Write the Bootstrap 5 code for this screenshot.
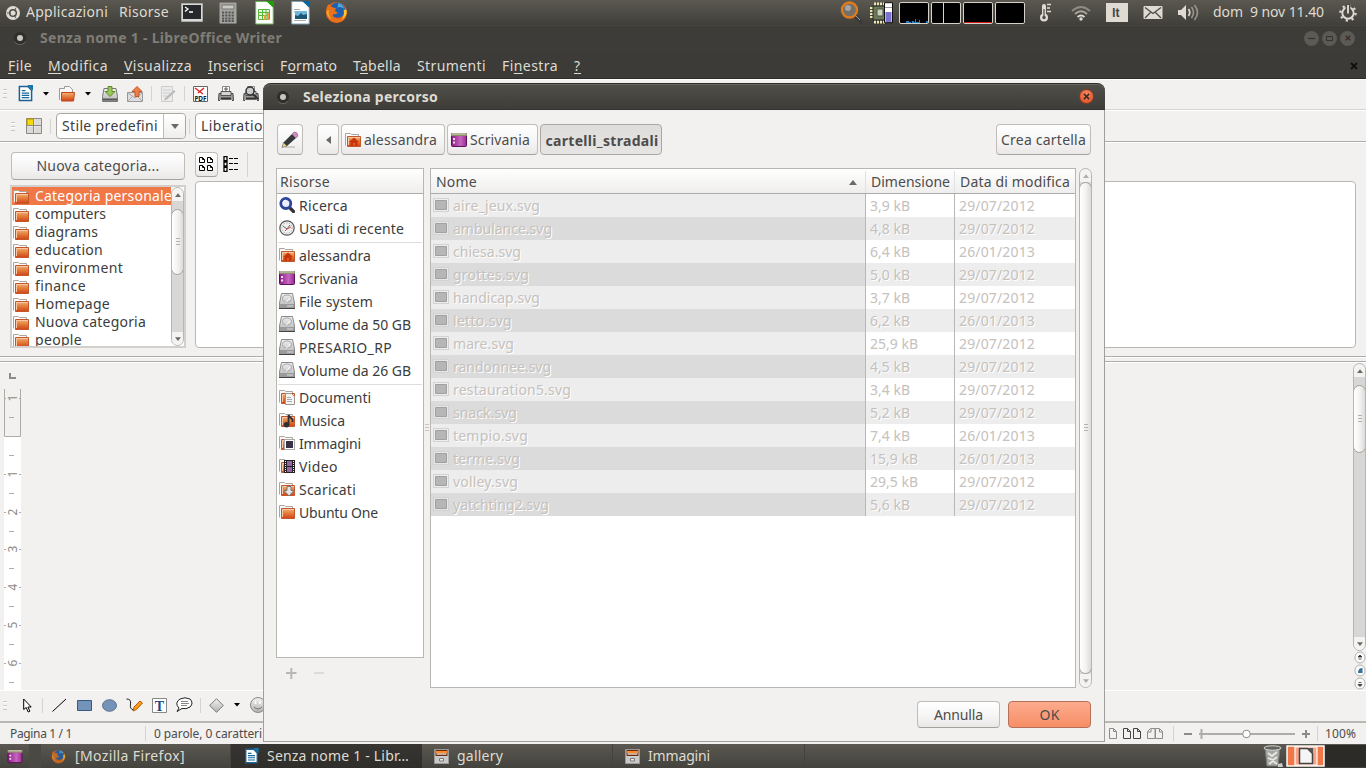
<!DOCTYPE html>
<html lang="it">
<head>
<meta charset="utf-8">
<title>Seleziona percorso</title>
<link rel="stylesheet" href="https://cdn.jsdelivr.net/npm/bootstrap@5.3.0/dist/css/bootstrap.min.css">
<style>
body{width:1366px;height:768px;overflow:hidden;background:#f2f1f0;font:14px/20px "Noto Sans","Open Sans",sans-serif;color:#3c3c3c}
svg{display:block;flex:none}
[data-w]{display:inline-block;white-space:nowrap;flex:none}
.bar{display:flex;align-items:center;flex:none}
.panel{height:25px;background:linear-gradient(#5a5850,#403f3a);color:#dfdbd2}
.panel [data-w]{padding-bottom:2px}
.wtitle{height:27px;background:#3d3c38;color:#7f7d76;font-weight:700;border-top:1px solid #45443f;padding-bottom:2px}
.menus{height:27px;background:#3c3b37;color:#dfdbd2;gap:16px;padding:2px 0 0 8px;border-bottom:1px solid #2e2d2a}
.menus u{text-underline-offset:2px}
.tool1{height:31px;border-top:1px solid #fff;border-bottom:1px solid #d6d4d1;padding-bottom:2px}
.tool2{height:32px;border-top:1px solid #fff;border-bottom:1px solid #aeaca8}
.vsep{width:1px;height:15px;background:#d5d3d0;flex:none}
.grip{width:4px;height:9px;flex:none;background:repeating-linear-gradient(#cbc9c6 0 1px,#fff 1px 2px,transparent 2px 4px)}
.gbtn{display:flex;align-items:center;justify-content:center;border:1px solid #c0bdb8;border-bottom-color:#a5a29d;border-radius:4px;background:linear-gradient(#fff,#f7f6f6 50%,#eae8e7);flex:none;color:#4c4c4c}
.gbtn.pressed{background:linear-gradient(#dfdddb,#e7e5e3);border-color:#aaa7a2;font-weight:700}
.combo{height:26px;border:1px solid #aaa7a2;border-radius:4px;background:#fff;display:flex;align-items:center;flex:none}
.combo .drop{width:22px;height:24px;border-left:1px solid #c0bdb8;background:linear-gradient(#fff,#efeeed);border-radius:0 4px 4px 0}
.gallery{height:215px;border-top:1px solid #fff}
.newcat{width:174px;height:28px;margin-top:9px}
.glist{width:176px;height:163px;border:2px solid #d2d0cc;background:#fff;margin:5px 0 0 10px;display:flex}
.gitems{width:159px;overflow:hidden}
.gitem{height:18px;display:flex;align-items:center;line-height:18px}
.gitem svg{margin:1px 6px 0 1px}
.gitem.sel{background:#f07746;color:#fff}
.split{height:6px;border-top:1px solid #aeaca8;border-bottom:1px solid #aeaca8;background:#f2f1f0;box-shadow:inset 0 1px #fff}
.page-area{height:328px;border-top:1px solid #fff}
.gscroll{width:13px;border:1px solid #b8b5b1;border-radius:7px;background:#d9d7d5;display:flex;flex-direction:column;overflow:hidden;flex:none}
.gscroll .cap{height:13px;background:#f4f3f2;display:flex;align-items:center;justify-content:center;flex:none}
.thumb{border:1px solid #a5a29d;border-radius:7px;background:linear-gradient(90deg,#fff,#f4f3f2 50%,#dddbd9);margin:0 -1px;display:flex;align-items:center;justify-content:center;flex:none}
.draw{height:31px;border-top:1px solid #fff;padding-bottom:2px}
.status{height:23px;border-top:2px solid #b9b7b3;font-size:12px;color:#4c4c4c;background:#f2f1f0}
.tasks{height:24px;background:linear-gradient(#5a5850,#43423d);color:#dfdbd2}
.task{height:24px;display:flex;align-items:center;flex:none;border-right:1px solid #44433e}
.task.active{background:linear-gradient(#363531,#2f2e2b);border:0}
.dialog{position:absolute;left:263px;top:83px;width:842px;height:659px;background:#f2f1f0;border:1px solid #a19f9b;border-top:0;border-radius:8px 8px 0 0}
.dtitle{height:27px;margin:0 -1px;background:linear-gradient(#4f4e48,#3e3d39);border-top:1px solid #2c2b28;border-bottom:1px solid #33322e;border-radius:8px 8px 0 0;box-shadow:inset 0 1px #6a6961;color:#dfdbd2;font-weight:700}
.close-dot{width:15px;height:15px;border-radius:50%;background:radial-gradient(circle at 50% 30%,#f58763,#df4c1d);border:1px solid #8e3a1f;display:flex;align-items:center;justify-content:center;flex:none;margin-right:11px}
.path{margin-top:14px;height:31px;gap:2px}
.box{border:1px solid #b9b7b3;background:#fff;flex:none}
.head{height:25px;background:linear-gradient(#fff,#efeeed);border-bottom:1px solid #aeaca8;display:flex;align-items:center;color:#4c4c4c;padding-top:2px}
.place{height:23px;display:flex;align-items:center}
.place svg{margin:0 4px 1px 2px}
.rule{height:1px;background:#dedddb;margin:2px 1px 1px}
.frow{height:23px;display:flex;background:#fff;color:#c5c1bd;text-shadow:1px 1px #fff}
.frow div{height:23px;display:flex;align-items:center;flex:none}
.frow svg{margin:0 0 1px}
.frow .nm{width:435px;background:#ededed;border-right:1px solid #b9b7b3;padding-left:2px}
.frow .sz{width:89px;border-right:1px solid #b9b7b3;padding-left:4px}
.frow .dt{padding-left:4px}
.frow:nth-child(even){background:#ededed}
.frow:nth-child(even) .nm{background:#dbdbdb}
.graph{width:30px;height:22px;border:1px solid #d6d2ca;border-radius:2px;background:#000;margin-right:2px;flex:none}
.wbtn{width:15px;height:15px;border-radius:50%;background:#5b5a54;flex:none;margin-left:3px;display:flex;align-items:center;justify-content:center}
.ok{background:linear-gradient(#fcab8d,#f78e66);border-color:#b5705a}
.actions .gbtn{width:83px;height:27px}
.s1{margin-left:1px}.s2{margin-left:2px}.s3{margin-left:3px}.s4{margin-left:4px}.s5{margin-left:5px}.s6{margin-left:6px}.s7{margin-left:7px}.s9{margin-left:9px}.s10{margin-left:10px}.s11{margin-left:11px}.s12{margin-left:12px}.s13{margin-left:13px}.s14{margin-left:14px}.s15{margin-left:15px}.s16{margin-left:16px}.s17{margin-left:17px}.s18{margin-left:18px}.s20{margin-left:20px}.s73{margin-left:73px}
</style>
<script src="https://cdn.jsdelivr.net/npm/bootstrap@5.3.0/dist/js/bootstrap.bundle.min.js"></script>
</head>
<body class="d-flex flex-column">
<svg width="0" height="0" class="position-absolute">
<defs>
<linearGradient id="or" x2="0" y2="1"><stop stop-color="#f0b277"/><stop offset=".5" stop-color="#e47a3a"/><stop offset="1" stop-color="#cf4317"/></linearGradient>
<linearGradient id="gr" x2="0" y2="1"><stop stop-color="#f2f2f2"/><stop offset="1" stop-color="#b2b2b2"/></linearGradient>
<linearGradient id="pu" x2="1"><stop stop-color="#8b1d84"/><stop offset=".6" stop-color="#c765c0"/><stop offset="1" stop-color="#9a2c93"/></linearGradient>
<symbol id="folder" viewBox="0 0 16 16"><path d="M.5 13.500v-12h5l1 1h7v3" fill="#fafafa" stroke="#aaa59d"/><path d="M2.500 4.500h13v10h-13z" fill="url(#or)" stroke="#c5562a"/><path d="M3.500 13V5.500H15" fill="none" stroke="#f5caa4"/></symbol>
<symbol id="home" viewBox="0 0 16 16"><use href="#folder"/><path d="M9 5.500L4 10h1.500v4h2.500v-3h2v3h2.500v-4H14z" fill="#c8350c"/></symbol>
<symbol id="desk" viewBox="0 0 16 16"><rect x=".5" y="1.500" width="15" height="13" rx="1" fill="url(#pu)" stroke="#5c1258"/><path d="M0 1h16v3H0z" fill="#8f8c6c"/><path d="M1 1.500h14v1H1z" fill="#d9d8c4"/><path d="M2 6h2v2H2zM2 9.500h2v2H2z" fill="#f3def2"/></symbol>
<symbol id="disk" viewBox="0 0 16 16"><path d="M2.500 .500h11l2 9.500v5H.5v-5z" fill="url(#gr)" stroke="#8a8a8a"/><ellipse cx="8" cy="5.500" rx="4.500" ry="3.500" fill="none" stroke="#a9a9a9"/><path d="M7 9.500L11 5" stroke="#fff"/><path d="M1 11h14v4H1z" fill="#9b9b9b"/><path d="M0 15.500h16" stroke="#444"/><path d="M8 13h6" stroke="#ddd"/></symbol>
<symbol id="file" viewBox="0 0 16 16"><rect x=".5" y="1.500" width="15" height="13" fill="#eee" fill-opacity=".6" stroke="#d2d2d2"/><path d="M2.500 3.500h11v9h-11z" fill="#b6b6b6" stroke="#a0a0a0"/></symbol>
<symbol id="mag" viewBox="0 0 16 16"><path d="M10.500 10.500l4 4" stroke="#333" stroke-width="3.200" stroke-linecap="round"/><circle cx="6.800" cy="6.500" r="5" fill="#e9eefa" stroke="#2d4697" stroke-width="2.800"/><path d="M4 6a3 3 0 0 1 3-3" stroke="#fff" fill="none"/></symbol>
<symbol id="clock" viewBox="0 0 16 16"><circle cx="8" cy="8" r="7.200" fill="#f0f0f0" stroke="#555" stroke-width="1.200"/><circle cx="8" cy="8" r="5.200" fill="none" stroke="#999" stroke-dasharray="1 1.600"/><path d="M4 6l4 3 3-4" stroke="#666" fill="none"/><path d="M8 9l4-2M6 11l2-2" stroke="#d44"/></symbol>
<symbol id="docs" viewBox="0 0 16 16"><use href="#folder"/><path d="M6.500 4.500h6l3 3v8h-9z" fill="#f4f4f2" stroke="#99958f"/><path d="M8 8.500h4M8 10.500h5M8 12.500h5" stroke="#aaa"/></symbol>
<symbol id="music" viewBox="0 0 16 16"><use href="#folder"/><path d="M9.500 13V3q1 2 4 4.500V10" fill="none" stroke="#2e3033" stroke-width="1.800"/><circle cx="7.500" cy="12.800" r="2.700" fill="#2e3033"/></symbol>
<symbol id="pics" viewBox="0 0 16 16"><use href="#folder"/><path d="M5.500 4.500h10v10h-10z" fill="#fff" stroke="#aaa"/><path d="M7 6h7v7H7z" fill="#3a3147"/></symbol>
<symbol id="video" viewBox="0 0 16 16"><use href="#folder"/><path d="M5 2h11v13H5z" fill="#262026"/><path d="M8 3h5v5H8zM8 9h5v5H8z" fill="#906a9d"/><path d="M6.500 3v12M14.500 3v12" stroke="#eee" stroke-dasharray="1 1"/></symbol>
<symbol id="down" viewBox="0 0 16 16"><use href="#folder"/><path d="M8 5.500h4v4h3l-5 5.500-5-5.500h3z" fill="#e5e5e5" stroke="#777"/></symbol>
<symbol id="up" viewBox="0 0 8 5"><path d="M0 5L4 0l4 5z" fill="#6c6a66"/></symbol>
<symbol id="dn" viewBox="0 0 8 5"><path d="M0 0h8L4 5z" fill="#6c6a66"/></symbol>
<symbol id="bars" viewBox="0 0 4 8"><path d="M0 .5h4M0 3.500h4M0 6.500h4" stroke="#b5b2ae"/></symbol>
<symbol id="arr" viewBox="0 0 6 4"><path d="M0 0h6L3 3.500z" fill="#000"/></symbol>
<symbol id="x" viewBox="0 0 8 8"><path d="M1 1l6 6M7 1L1 7" stroke="#3a2b24" stroke-width="1.700"/></symbol>
<symbol id="dot" viewBox="0 0 14 14"><circle cx="7" cy="7" r="6" fill="#2f2e2b"/><path d="M2 11a6 6 0 0 0 10 0" fill="none" stroke="#6a6963"/><circle cx="7" cy="7" r="3" fill="#c9c6bf"/></symbol>
<symbol id="ff" viewBox="0 0 24 24"><circle cx="12" cy="12" r="11" fill="#e2631c"/><circle cx="13" cy="9.500" r="8" fill="#1f5fae"/><path d="M14 2q5 1 6 6-4-3-7-1z" fill="#4fa7de"/><path d="M2 6q-2 6 1 11 4 6 10 5.500 8-1 9.500-10-1 3-4 5-5 3-9 0-2-2-1-4 2 1 5-1l-3-2q0-2 1-3Q5 6 4 3z" fill="#e8721c"/><path d="M22.500 9q1 7-5 10 3-4 2-10z" fill="#ffc72c"/><path d="M4 9q-1 6 3 10-5-2-5.500-8z" fill="#f9a72b"/></symbol>
<symbol id="writer" viewBox="0 0 16 18"><path d="M1.500 1.500h9l4 4v11h-13z" fill="#fff" stroke="#1e6091" stroke-width="1.600"/><path d="M10 0h6v6z" fill="#1675a9"/><path d="M4 6h4M4 8.500h8M4 11h8M4 13.500h8" stroke="#126a9d" stroke-width="1.300"/></symbol>
<symbol id="cab" viewBox="0 0 15 15"><path d="M.5.500h14v14H.5z" fill="#d4d4d4" stroke="#999"/><path d="M1.500 1h12v6h-12z" fill="#6a2c12"/><path d="M2 3h11" stroke="#ff8a2e" stroke-width="2"/><path d="M2.500 5h10" stroke="#fff4e0" stroke-width="1.300"/><path d="M1 7.500h13V14H1z" fill="#c9c9c9"/><path d="M5.500 9.500h4v2.500h-4z" fill="#eee" stroke="#777"/></symbol>
<symbol id="printer" viewBox="0 0 16 16"><path d="M4.500.500h7v7h-7z" fill="#fff" stroke="#888"/><path d="M1 7.500h14l.5 7H.5z" fill="#9b9b9b" stroke="#4b4b4b"/><path d="M3 5.500h10v4H3z" fill="#d5d5d5" stroke="#555"/><path d="M3 12.500h10" stroke="#333" stroke-width="2"/><path d="M2 14.500h12" stroke="#eee"/></symbol>
<symbol id="pg" viewBox="0 0 8 11"><path d="M.5.500h4l3 3v7h-7zM4.500.500v3h3" fill="none" stroke="currentColor"/></symbol>
<symbol id="mini" viewBox="0 0 8 8"><path d="M1.500 1.500h3l2 2v3h-5zM4.500 1.500v2h2" fill="#fff" stroke="#000"/></symbol>
</defs></svg>

<header class="bar panel">
<svg class="s6" width="14" height="14" viewBox="0 0 14 14"><circle cx="7" cy="7" r="7" fill="#dfdbd2"/><circle cx="7" cy="7" r="3.300" fill="none" stroke="#4b4a44" stroke-width="1.500"/><path d="M7 7h-6M7 7l3-5.200M7 7l3 5.200" stroke="#4b4a44" stroke-width=".9"/><circle cx="7" cy="7" r="2.300" fill="#dfdbd2"/></svg>
<span class="s6" data-w="82">Applicazioni</span><span class="s11" data-w="50">Risorse</span>
<svg class="s12" width="22" height="19" viewBox="0 0 22 19"><path d="M.5.500h21v18H.5z" fill="#d9d9d9" stroke="#aaa"/><path d="M2 2h18v14H2z" fill="#26282a"/><path d="M4 4l3 2-3 2.500M8 9h4" fill="none" stroke="#fff" stroke-width="1.300"/></svg>
<svg class="ms-3" width="18" height="22" viewBox="0 0 18 22"><rect x=".5" y=".5" width="17" height="21" rx="1" fill="#a5a5a0" stroke="#7a7a75"/><path d="M3 3h12v4H3z" fill="#c8cbc0" stroke="#777"/><path d="M3 10.500h12M3 13.500h12M3 16.500h12M3 19h12" stroke="#555" stroke-width="1.800" stroke-dasharray="2.200 1"/></svg>
<svg class="s18" width="19" height="24" viewBox="0 0 19 24"><path d="M.7.500h12l5.500 6v16.500H.7z" fill="#fff" stroke="#6db355"/><path d="M11 0h8v7z" fill="#18a303"/><path d="M3.500 8.500h11v10h-11zM3.500 11.500h11M3.500 14.500h11M7.500 8v10M11 8v10" fill="#e9f7dc" stroke="#58b63c"/><path d="M9 19v-5h2v5m1 0v-7h2v7" fill="#e9a13b"/></svg>
<svg class="s17" width="19" height="24" viewBox="0 0 19 24"><path d="M.7.500h12l5.500 6v16.500H.7z" fill="#fff" stroke="#7d9fb6"/><path d="M11 0h8v7z" fill="#0369a3"/><path d="M3 8.500h6M3 11h3M3 19.500h12" stroke="#aaa"/><path d="M4 10h12v8H4z" fill="#70b6db"/><path d="M4 18v-4l3 1 3-3 2 2 4-1v5z" fill="#1d5574"/></svg>
<svg class="s15" width="23" height="23"><use href="#ff"/></svg>
<div class="ms-auto bar">
<svg width="23" height="23" viewBox="0 0 23 23"><path d="M14 14l7 7" stroke="#3b3a38" stroke-width="4" stroke-linecap="round"/><path d="M15 14l5 5" stroke="#999" stroke-width="1"/><circle cx="9.500" cy="9" r="7.500" fill="#746f67" stroke="#e07b1d" stroke-width="2.400"/><circle cx="8" cy="7" r="3" fill="#cbc8c3" opacity=".6"/></svg>
<svg class="s7" width="24" height="22" viewBox="0 0 24 22"><path d="M4 2h11M4 20h11" stroke="#ece7ad" stroke-width="3" stroke-dasharray="2 1"/><path d="M1.500 5v12" stroke="#ece7ad" stroke-width="3" stroke-dasharray="2 1"/><path d="M3 4h12v14H3z" fill="#6b7a58" stroke="#222"/><path d="M7 7h6v7H7z" fill="#c9d0bf" stroke="#4a5540"/><path d="M14.500.700h8v20h-8z" fill="#fff" stroke="#111"/><path d="M15.500 10h6v10h-6z" fill="#7a73cf"/><path d="M15 5.500h7" stroke="#999"/></svg>
<svg class="graph s5" viewBox="0 0 28 20"><path d="M6 20v-2h3v1h2v1zM12 20v-2h2v1h1v-3h1v3h3v-2h1v3zM26 20v-2h2v2z" fill="#1b7fc4"/></svg><svg class="graph" viewBox="0 0 28 20"><path d="M11.500 0v20" stroke="#fce03a"/></svg><svg class="graph" viewBox="0 0 28 20"><path d="M0 19.500h28" stroke="#d01818"/></svg><svg class="graph" viewBox="0 0 28 20"></svg>
<svg class="s12" width="12" height="19" viewBox="0 0 12 19"><path d="M5 3v11" stroke="#dfdbd2" stroke-width="4" stroke-linecap="round"/><circle cx="5" cy="14.500" r="4" fill="#dfdbd2"/><path d="M5 6v8" stroke="#4b4a44" stroke-width="1.200"/><circle cx="5" cy="14.500" r="1.700" fill="#4b4a44"/><path d="M8 1.500h4M8 5h3M8 8.500h4" stroke="#dfdbd2" stroke-width="1.500"/></svg>
<svg class="s20" width="20" height="16" viewBox="0 0 20 16"><g fill="none" stroke-width="1.900"><path d="M1 6q9-8 18 0" stroke="#8f8c84"/><path d="M4 9q6-5.500 12 0" stroke="#aaa79f"/><path d="M6.500 12q3.500-3 7 0" stroke="#dfdbd2"/></g><circle cx="10" cy="14" r="1.700" fill="#dfdbd2"/></svg>
<svg class="s15" width="22" height="19" viewBox="0 0 22 19"><path d="M0 0h22v19H0z" fill="#dfdbd2"/><text x="6" y="14" font-size="12" font-weight="700" fill="#4a4943" font-family="Roboto,sans-serif">It</text></svg>
<svg class="s15" width="20" height="14" viewBox="0 0 20 14"><rect width="19" height="13" x=".5" rx="1" fill="#dfdbd2"/><path d="M2 1.500l8 6 8-6M2 12l5.500-5.500M18 12l-5.500-5.500" stroke="#4b4a44" fill="none" stroke-width="1.300"/></svg>
<svg class="s15" width="21" height="17" viewBox="0 0 21 17"><path d="M0 6h3l5-5v15l-5-5H0z" fill="#dfdbd2"/><path d="M10.500 5q2.500 3.500 0 7" fill="none" stroke="#dfdbd2" stroke-width="1.700"/><path d="M13.500 3q4 5.500 0 11M16.500 1q6 7.500 0 15" fill="none" stroke="#98958d" stroke-width="1.600"/></svg>
<span class="s14" data-w="111">dom&nbsp; 9 nov 11.40</span>
<svg class="s15" width="18" height="18" viewBox="0 0 19 19"><circle cx="9.500" cy="9.500" r="6" fill="none" stroke="#dfdbd2" stroke-width="2"/><circle cx="9.500" cy="9.500" r="8" fill="none" stroke="#dfdbd2" stroke-width="2.500" stroke-dasharray="2.300 4"/><path d="M9.500 0v10" stroke="#4b4a44" stroke-width="5"/><path d="M9.500 1v9" stroke="#dfdbd2" stroke-width="2"/></svg><span class="s9"></span>
</div></header>

<div class="bar wtitle"><svg class="s13" width="14" height="14"><use href="#dot"/></svg><span class="s13" data-w="242">Senza nome 1 - LibreOffice Writer</span>
<span class="ms-auto wbtn"><svg width="7" height="7"><path d="M0 3.500h7" stroke="#33322e" stroke-width="1.200"/></svg></span><span class="wbtn"><svg width="7" height="5"><path d="M.5.500h6v4h-6z" fill="none" stroke="#33322e"/></svg></span><span class="wbtn"><svg width="6" height="6"><use href="#x"/></svg></span><span class="s11"></span></div>
<nav class="bar menus"><span data-w="24"><u>F</u>ile</span><span data-w="60"><u>M</u>odifica</span><span data-w="68"><u>V</u>isualizza</span><span data-w="56"><u>I</u>nserisci</span><span data-w="57">F<u>o</u>rmato</span><span data-w="48">T<u>a</u>bella</span><span data-w="69">Strumenti</span><span data-w="56">Fi<u>n</u>estra</span><span data-w="7"><u>?</u></span><svg class="ms-auto me-2" width="8" height="8" viewBox="0 0 8 8"><path d="M1 1l6 6M7 1L1 7" stroke="#111" stroke-width="2"/></svg></nav>

<div class="bar tool1"><span class="grip s3"></span>
<svg class="s11" width="15" height="17"><use href="#writer"/></svg><svg class="s10" width="6" height="4"><use href="#arr"/></svg>
<svg class="s10" width="16" height="16" viewBox="0 0 16 16"><path d="M.5 14V2.500h5V.500h5l3 3V7" fill="#f8f8f8" stroke="#999"/><path d="M2.500 6.500h13l-1 8.500h-12z" fill="url(#or)" stroke="#c5431a"/></svg><svg class="s10" width="6" height="4"><use href="#arr"/></svg>
<svg class="s11" width="16" height="16" viewBox="0 0 16 16"><path d="M2 2.500h12l1.500 8v5H.5v-5z" fill="url(#gr)" stroke="#777"/><path d="M6 .500h4v5h3L8 10.500 3 5.500h3z" fill="#9bc75f" stroke="#5c8a25"/><path d="M1 13.500h14" stroke="#555" stroke-width="2"/></svg>
<svg class="s9" width="16" height="16" viewBox="0 0 16 16"><path d="M.5 6.500h15v9H.5z" fill="#ddd" stroke="#999"/><path d="M1 7l7 5 7-5M1 15l5-5M15 15l-5-5" fill="none" stroke="#aaa"/><path d="M10 .500l5 5h-3v5H8v-5H5z" fill="#e9804a" stroke="#c9541f"/></svg>
<span class="vsep ms-2"></span>
<svg class="ms-2" width="16" height="16" viewBox="0 0 16 16"><path d="M1.500.500h11v15h-11z" fill="#ececec" stroke="#ccc"/><path d="M3 4h8M3 7h7M3 10h4" stroke="#ccc"/><path d="M5 12l9-8 1.500 1.500-8.500 8-3 1z" fill="#bbb"/></svg>
<span class="vsep ms-2"></span>
<svg class="ms-2" width="15" height="16" viewBox="0 0 15 16"><path d="M.5.500h14v15H.5z" fill="#fff" stroke="#666"/><path d="M2 2l8 6M11 2L5 7" stroke="#d22" stroke-width="1.500"/><text x="1.500" y="14.500" font-size="6.500" font-weight="700" textLength="12" fill="#222">PDF</text></svg>
<svg class="s10" width="16" height="16"><use href="#printer"/><path d="M8 1v4M6 3h4" stroke="#555"/></svg>
<svg class="s9" width="16" height="16"><use href="#printer"/><circle cx="7" cy="5" r="4" fill="#ccc" stroke="#333" stroke-width="1.500"/><path d="M10 8l5 5" stroke="#333" stroke-width="2"/></svg></div>

<div class="bar tool2"><span class="grip s11"></span>
<svg class="s11" width="16" height="16" viewBox="0 0 16 16"><path d="M.5.500h15v15H.5z" fill="#dcdad7" stroke="#8d8b88"/><path d="M1 1h6.500v6.500H1z" fill="#f5d90a" stroke="#a89500"/><path d="M8 1v14M1 8h14" stroke="#f2f1f0"/><path d="M7.500 0v16M0 7.500h16" stroke="#8d8b88"/></svg>
<span class="vsep ms-2"></span>
<div class="combo s5"><span class="s5" data-w="96">Stile predefini</span><span class="drop s5 bar justify-content-center"><svg width="8" height="5"><use href="#dn"/></svg></span></div>
<span class="vsep s3"></span><div class="combo s5 pe-5"><span class="s5" data-w="71">Liberation</span></div></div>

<section class="d-flex gallery">
<div><div class="gbtn s11 newcat"><span data-w="123">Nuova categoria...</span></div>
<div class="glist"><div class="gitems" id="cats"></div>
<div class="gscroll h-100"><span class="cap"><svg width="6" height="4"><use href="#up"/></svg></span><div class="pt-1 pb-1"></div><span class="thumb" style="height:66px"><svg width="4" height="8"><use href="#bars"/></svg></span><span class="cap mt-auto"><svg width="6" height="4"><use href="#dn"/></svg></span></div></div></div>
<div class="s9"><div class="d-flex" style="height:38px;padding-top:9px"><span class="gbtn" style="width:23px;height:25px"><svg width="17" height="17" viewBox="0 0 17 17"><use href="#mini" width="8" height="8"/><use href="#mini" x="8" width="8" height="8"/><use href="#mini" y="8" width="8" height="8"/><use href="#mini" x="8" y="8" width="8" height="8"/></svg></span>
<svg class="s5 mt-1" width="16" height="16" viewBox="0 0 16 16"><path d="M1 .700h3v4H1zM1 6h3v4H1zM1 11.300h3v4H1z" fill="#fff" stroke="#000" stroke-width="1.300"/><path d="M6 2.500h10M6 7.500h10M6 13.500h10" stroke="#000" stroke-dasharray="4 1"/></svg><span class="vsep ms-2" style="height:25px"></span></div>
<div class="box rounded-1" style="width:1161px;height:167px"></div></div>
</section>
<div class="split flex-shrink-0"></div>
<section class="page-area d-flex flex-shrink-0">
<svg id="ruler" width="30" height="327" viewBox="0 363 30 327"><path d="M10 373v5h6" fill="none" stroke="#8d8b88" stroke-width="2"/><path d="M4 437h17v253H4z" fill="#fff"/><path d="M4.500 389v47.500h16V389" fill="none" stroke="#aeaca8"/></svg>
<div class="ms-auto bar flex-column"><div class="gscroll" style="height:288px"><span class="cap"><svg width="6" height="4"><use href="#up"/></svg></span><div class="pt-1 pb-1"></div><span class="thumb" style="height:68px"><svg width="4" height="8"><use href="#bars"/></svg></span><span class="cap mt-auto"><svg width="6" height="4"><use href="#dn"/></svg></span></div>
<svg width="12" height="39" viewBox="0 0 12 39"><g fill="#fafafa" stroke="#b5b2ae"><rect x="1" y="1" width="10" height="11" rx="5"/><rect x="1" y="14" width="10" height="11" rx="5"/><rect x="1" y="27" width="10" height="11" rx="5"/></g><path d="M4 6h4L6 4zM4.500 8h3M4.500 31.500h3M4 33.500h4l-2 2z" fill="#333" stroke="#333" stroke-width=".8"/><path d="M4 22q0-5 4.500-5v5z" fill="#36719a"/></svg></div>
</section>

<div class="bar draw"><span class="grip s3"></span>
<svg class="s16" width="9" height="15" viewBox="0 0 9 15"><path d="M.7 1v10.500l2.500-2 2 4.500 1.700-.8-2-4.200h3.300z" fill="#fff" stroke="#000"/></svg><span class="vsep s10"></span>
<svg class="s9" width="15" height="15"><path d="M.5 13.500L14 1" stroke="#000"/></svg>
<svg class="s10" width="15" height="11"><path d="M.5.500h14v10H.5z" fill="#7394b8" stroke="#385a80"/></svg>
<svg class="s10" width="15" height="13"><ellipse cx="7.500" cy="6.500" rx="7" ry="5.800" fill="#7394b8" stroke="#5d7289"/></svg>
<svg class="s9" width="17" height="14" viewBox="0 0 17 14"><path d="M.5 1q5 0 4 5t3 6" fill="none" stroke="#222"/><path d="M7 13l1-4 6-6 2.500 2-6 6.500z" fill="#f59a1b" stroke="#b85a0a"/></svg>
<svg class="s9" width="15" height="15" viewBox="0 0 15 15"><path d="M.5.500h14v14H.5z" fill="#fff" stroke="#888"/><text x="2.800" y="12.500" font-family="Liberation Serif,serif" font-weight="700" font-size="14" fill="#1c4587">T</text></svg>
<svg class="s9" width="17" height="16" viewBox="0 0 17 16"><path d="M3 11q-5-5 1-9 5-2.500 10 0 4 4 0 8-4 2.500-8 1.500L1 14.500z" fill="#fff" stroke="#222"/><path d="M5 4.500h7M5 6.500h8M5 8.500h6" stroke="#888"/></svg>
<span class="vsep s7"></span><svg class="ms-2" width="15" height="15"><path d="M7.500.700l6.800 6.800-6.800 6.800L.7 7.500z" fill="url(#gr)" stroke="#777"/></svg><svg class="s10" width="6" height="4"><use href="#arr"/></svg>
<svg class="s10" width="16" height="16"><circle cx="8" cy="8" r="7.500" fill="url(#gr)" stroke="#888"/><path d="M5.500 4v3M10 4v3" stroke="#fff" stroke-width="1.500"/><path d="M4 10q4 4 8 0" fill="none" stroke="#777"/></svg></div>

<div class="bar status"><span class="s10" data-w="62">Pagina 1 / 1</span><span class="vsep s73"></span><span class="ms-2" data-w="108">0 parole, 0 caratteri</span>
<div class="ms-auto bar text-secondary"><svg width="8" height="11" style="color:#8d8b88"><use href="#pg"/></svg><svg class="s6" width="18" height="11" style="color:#444"><use href="#pg" width="8"/><use href="#pg" x="10" width="8"/></svg><svg class="s6" width="17" height="11" style="color:#8d8b88"><path d="M.5 10.500v-7l3-3h4.500v10zM8.500.500h4l3 3v7h-7zM12.500 1v3h3M4 1v3H1" fill="none" stroke="currentColor"/></svg><span class="vsep s9"></span>
<svg class="s10" width="126" height="12" viewBox="0 0 126 12"><path d="M0 6h8M118 6h8M122 2v8" stroke="#8d8b88" stroke-width="2"/><path d="M15 6h96M17.500 1v10" stroke="#aeaca8" stroke-width="2"/><circle cx="62.500" cy="6" r="3.800" fill="#fff" stroke="#8d8b88"/></svg><span class="vsep s7"></span><span class="s7" style="color:#4c4c4c" data-w="31">100%</span><span class="s10"></span></div></div>

<footer class="bar tasks"><svg class="s7" width="16" height="15"><use href="#desk"/></svg><svg class="s6" width="12" height="24"><path d="M0 0h12v24H0z" fill="#4a4943"/></svg>
<div class="task" style="width:190px"><svg class="s10" width="15" height="15" opacity=".75"><use href="#ff"/></svg><span class="s9" data-w="110">[Mozilla Firefox]</span></div>
<div class="task active" style="width:191px"><svg class="s13" width="15" height="16"><use href="#writer"/></svg><span class="ms-2" data-w="142">Senza nome 1 - Libr…</span></div>
<div class="task" style="width:191px"><svg class="s12" width="15" height="15"><use href="#cab"/></svg><span class="ms-2" data-w="46">gallery</span></div>
<div class="task" style="width:192px"><svg class="s12" width="15" height="15"><use href="#cab"/></svg><span class="ms-2" data-w="62">Immagini</span></div>
<svg class="ms-auto" width="21" height="23" viewBox="0 0 21 23"><path d="M2 3h15l-2 18H4z" fill="#a5a8a2" stroke="#777"/><ellipse cx="9.500" cy="3" rx="8.500" ry="2.200" fill="#62645f" stroke="#d8d8d5"/><path d="M5 8l4 3 5-4M5 13l5 2 4-3M6 19l4-3 4 3" stroke="#e8e8e8" stroke-width="1.800" fill="none"/><path d="M15 19l4-1 1 4h-5z" fill="#ccc"/></svg>
<svg class="s2" width="80" height="24" viewBox="0 0 80 24"><path d="M0 1h80v22H0z" fill="#2c2b28"/><path d="M1 2h37v20H1z" fill="#f07746" stroke="#fff" stroke-width="1.500"/><path d="M9 3h22v18H9z" fill="#f8a385" stroke="#fff" stroke-width="1.200"/><path d="M13.500 4.500h8l5 5v10h-13z" fill="#f5f5f5" stroke="#444" stroke-width="1.500"/><path d="M21 4h6v6z" fill="#555"/></svg></footer>

<main class="dialog">
<div class="bar dtitle"><svg class="s13" width="14" height="14"><use href="#dot"/></svg><span class="s13" data-w="135">Seleziona percorso</span><span class="close-dot ms-auto"><svg width="7" height="7"><use href="#x"/></svg></span></div>
<div class="bar s13 path">
<span class="gbtn h-100" style="width:26px"><svg width="18" height="18" viewBox="0 0 18 18"><path d="M4 16h10" stroke="#ccc" stroke-width="2"/><path d="M1 16.500l1.500-5 3.500 3.500z" fill="#e9dd83" stroke="#555" stroke-width=".6"/><path d="M2.500 11.500l8.500-8.500 4 4-9 8z" fill="#36383a"/><path d="M11 3l2-2q4 0 4 4l-2 2z" fill="#d18bc5" stroke="#8f5b86" stroke-width=".6"/></svg></span>
<span class="gbtn h-100 s12" style="width:22px"><svg width="5" height="8"><path d="M5 0v8L0 4z" fill="#6c6a66"/></svg></span>
<span class="gbtn h-100 pe-1" style="width:104px"><svg width="16" height="16"><use href="#home"/></svg><span class="s3" data-w="73">alessandra</span></span>
<span class="gbtn h-100 pe-1" style="width:91px"><svg width="16" height="16"><use href="#desk"/></svg><span class="s3" data-w="60">Scrivania</span></span>
<span class="gbtn pressed h-100" style="width:122px;padding:2px 0 0 2px"><span data-w="113">cartelli_stradali</span></span>
<span class="gbtn h-100 ms-auto" style="width:95px"><span data-w="85">Crea cartella</span></span><span class="s11"></span></div>
<div class="d-flex s12" style="margin-top:13px;height:520px">
<div><div class="box" style="width:148px;height:490px"><div class="head"><span class="s3" data-w="50">Risorse</span></div><div id="places"></div></div>
<svg class="s10" width="46" height="30" viewBox="0 0 46 30"><path d="M0 15h10.500M5.300 10v11" stroke="#b9b7b3" stroke-width="2"/><path d="M28 15h10" stroke="#dddbd8" stroke-width="2"/></svg></div>
<span class="bar s1"><svg width="4" height="8"><use href="#bars" opacity=".7"/></svg></span>
<div class="box s1" style="width:646px;height:520px"><div class="head"><span class="bar h-100 border-end" style="width:435px"><span class="s5" data-w="41">Nome</span><svg class="ms-auto me-2" width="8" height="5"><use href="#up"/></svg></span><span class="bar h-100 border-end" style="width:89px"><span class="s5" data-w="79">Dimensione</span></span><span class="s5" data-w="110">Data di modifica</span></div><div id="files"></div></div>
<div class="gscroll s3" style="height:520px"><span class="cap"><svg width="6" height="4" opacity=".5"><use href="#up"/></svg></span><span class="thumb flex-fill"><svg width="4" height="8"><use href="#bars"/></svg></span><span class="cap"><svg width="6" height="4" opacity=".5"><use href="#dn"/></svg></span></div></div>
<div class="d-flex justify-content-end gap-2 actions" style="margin:13px 13px 0 0"><span class="gbtn"><span data-w="49">Annulla</span></span><span class="gbtn ok"><span data-w="20">OK</span></span></div>
</main>

<script>
const icon = id => `<svg width="16" height="16"><use href="#${id}"/></svg>`;
const cats = [["Categoria personale",137],["computers",71],["diagrams",63],["education",68],["environment",88],["finance",51],["Homepage",75],["Nuova categoria",111],["people",47]];
document.getElementById("cats").innerHTML = cats.map(([t,w],i)=>`<div class="gitem${i?"":" sel"}">${icon("folder")}<span data-w="${w}">${t}</span></div>`).join("");
const places = [["mag","Ricerca",49],["clock","Usati di recente",105],0,["home","alessandra",72],["desk","Scrivania",59],["disk","File system",74],["disk","Volume da 50 GB",112],["disk","PRESARIO_RP",93],["disk","Volume da 26 GB",112],0,["docs","Documenti",72],["music","Musica",46],["pics","Immagini",62],["video","Video",39],["down","Scaricati",57],["folder","Ubuntu One",79]];
document.getElementById("places").innerHTML = places.map(p=>p?`<div class="place">${icon(p[0])}<span data-w="${p[2]}">${p[1]}</span></div>`:`<div class="rule"></div>`).join("");
const A="29/07/2012",B="26/01/2013";
const files = [["aire_jeux",87,"3,9",A],["ambulance",99,"4,8",A],["chiesa",68,"6,4",B],["grottes",76,"5,0",A],["handicap",87,"3,7",A],["letto",59,"6,2",B],["mare",61,"25,9",A],["randonnee",98,"4,5",A],["restauration5",118,"3,4",A],["snack",64,"5,2",A],["tempio",75,"7,4",B],["terme",67,"15,9",B],["volley",65,"29,5",A],["yatchting2",96,"5,6",A]];
document.getElementById("files").innerHTML = files.map(([n,w,s,d])=>`<div class="frow"><div class="nm">${icon("file")}<span class="s4" data-w="${w}">${n}.svg</span></div><div class="sz"><span data-w="${s.length>3?48:40}">${s} kB</span></div><div class="dt"><span data-w="76">${d}</span></div></div>`).join("");
const ruler = document.getElementById("ruler");
let marks = "";
[["1",398],["1",474],["2",512],["3",549],["4",587],["5",625],["6",663]].forEach(([n,y])=>{
  marks += `<path d="M4 ${y+.5}h2M19 ${y+.5}h2M9 ${y+19.5}h5" stroke="#aeaca8"/><text transform="translate(17 ${y+3.5}) rotate(-90)" font-size="12" fill="#8d8b88">${n}</text>`;
});
ruler.insertAdjacentHTML("beforeend", marks + '<path d="M9 455.500h5" stroke="#aeaca8"/>');
// Spread each label over its nominal width
document.querySelectorAll("[data-w]").forEach(e=>{
  const w = +e.dataset.w, n = e.textContent.length;
  e.style.letterSpacing = ((w - e.getBoundingClientRect().width) / n) + "px";
});
</script>
</body>
</html>
